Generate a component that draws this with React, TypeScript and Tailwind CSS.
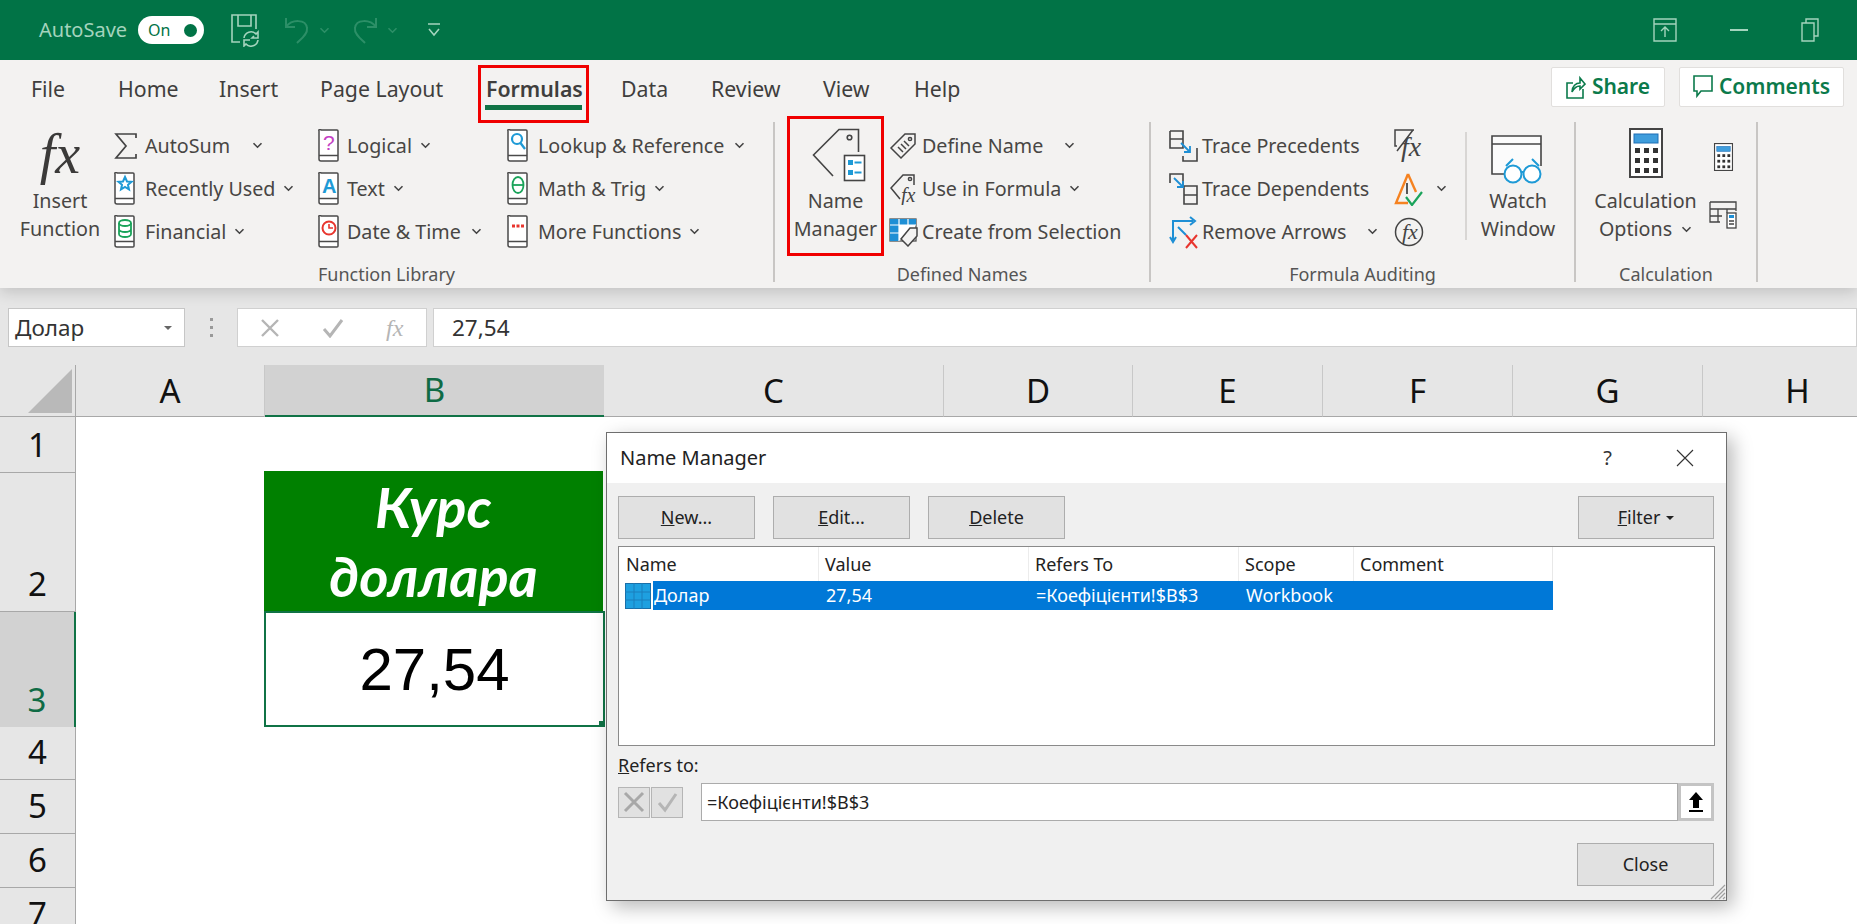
import type { ReactNode } from "react";

const Chev = ({ className = "", color = "#444" }: { className?: string; color?: string }) => (
  <svg width="11" height="7" viewBox="0 0 11 7" className={className}>
    <path d="M1.5 1.2 5.5 5.2 9.5 1.2" fill="none" stroke={color} strokeWidth="1.6" />
  </svg>
);

const Book = ({ children }: { children?: ReactNode }) => (
  <svg width="22" height="33" viewBox="0 0 22 33">
    <path d="M3 1h16a1 1 0 0 1 1 1v29a1 1 0 0 1-1 1H3a2 2 0 0 1-2-2V2a1 1 0 0 1 2-1z" fill="#fff" stroke="#4a4a4a" strokeWidth="1.5" />
    <path d="M1 26.5h19" stroke="#4a4a4a" strokeWidth="1.5" />
    {children}
  </svg>
);

const SmallFx = ({ x, y, size = 20 }: { x: number; y: number; size?: number }) => (
  <text x={x} y={y} fontFamily="Liberation Serif" fontStyle="italic" fontSize={size} fill="#444" stroke="none">fx</text>
);

const Item = ({ icon, iconBox, text, chev }: { icon: ReactNode; iconBox: string; text?: string; chev?: string }) => (
  <div className="flex h-[43px] items-center">
    <div className={iconBox + " flex items-center"}>{icon}</div>
    {text && <span className="whitespace-nowrap">{text}</span>}
    {chev && <Chev className={chev} />}
  </div>
);

const GroupLabel = ({ text }: { text: string }) => (
  <div className="flex h-[24px] items-center justify-center text-[18px] text-[#555]">{text}</div>
);

const Sep = () => <div className="my-[6px] w-[2px] bg-[#c8c6c4]" />;

const sigma = (
  <svg width="24" height="28" viewBox="0 0 24 28">
    <path d="M22 6V2H2l10 12L2 26h20v-4" fill="none" stroke="#444" strokeWidth="1.7" />
  </svg>
);

const TagIcon = () => (
  <svg width="54" height="54" viewBox="0 0 54 54">
    <path d="M46.5 24V1.5H27L1.5 27 21 48" fill="none" stroke="#444" strokeWidth="1.6" />
    <circle cx="37.5" cy="9.5" r="2.3" fill="none" stroke="#444" strokeWidth="1.6" />
    <rect x="32.5" y="27.5" width="20" height="25" fill="#fff" stroke="#444" strokeWidth="1.6" />
    <rect x="36" y="32" width="5" height="5" fill="#1e9ad6" />
    <rect x="36" y="42" width="5" height="5" fill="#1e9ad6" />
    <path d="M42.5 34.5h7M42.5 44.5h7" stroke="#1e9ad6" strokeWidth="1.8" />
  </svg>
);

const traceBlue = "#1e8fd5";

const Calculator = ({ w, h }: { w: number; h: number }) => (
  <svg width={w} height={h} viewBox="0 0 34 50">
    <rect x="1" y="1" width="32" height="48" fill="#fff" stroke="#444" strokeWidth="2" />
    <rect x="5" y="6" width="24" height="9" fill="#3f9ddc" stroke="#1f6fb5" />
    {[20, 30, 40].flatMap((y) =>
      [6, 15, 24].map((x) => <rect key={x + "-" + y} x={x} y={y} width="5" height="5" fill="#333" />),
    )}
  </svg>
);

const rowHeads = [
  { n: "1", h: "h-[56px]" },
  { n: "2", h: "h-[139px]" },
  { n: "3", h: "h-[115px]", active: true },
  { n: "4", h: "h-[53px]" },
  { n: "5", h: "h-[54px]" },
  { n: "6", h: "h-[54px]" },
  { n: "7", h: "h-[54px]" },
];

const cols = [
  { n: "A", w: "w-[189px]" },
  { n: "B", w: "w-[339px]", active: true },
  { n: "C", w: "w-[340px]" },
  { n: "D", w: "w-[189px]" },
  { n: "E", w: "w-[190px]" },
  { n: "F", w: "w-[190px]" },
  { n: "G", w: "w-[190px]" },
  { n: "H", w: "w-[190px]" },
];

const tabs = [
  { t: "File", w: "w-[87px]" },
  { t: "Home", w: "w-[101px]" },
  { t: "Insert", w: "w-[101px]" },
  { t: "Page Layout", w: "w-[166px]" },
  { t: "Formulas", w: "w-[135px]", active: true },
  { t: "Data", w: "w-[90px]" },
  { t: "Review", w: "w-[112px]" },
  { t: "View", w: "w-[91px]" },
  { t: "Help", w: "w-[60px]" },
];

const DlgButton = ({ children, className }: { children: ReactNode; className: string }) => (
  <div className={className + " flex h-[43px] items-center justify-center border border-[#adadad] bg-[#e1e1e1] text-[18px] text-[#222]"}>{children}</div>
);

export default function App() {
  return (
    <div className="relative flex h-[924px] w-[1857px] flex-col overflow-hidden bg-white font-['Noto_Sans',sans-serif] text-[#484644]">
      {/* title bar */}
      <div className="flex h-[60px] shrink-0 items-center bg-[#017346] pl-[39px] pr-[38px] text-[#a4d4bd]">
        <span className="w-[88px] whitespace-nowrap text-[20px]">AutoSave</span>
        <div className="ml-[11px] flex h-[28px] w-[66px] items-center justify-between rounded-full bg-white pl-[10px] pr-[7px] text-[16px] text-[#017346]">
          <span>On</span>
          <span className="h-[13px] w-[13px] rounded-full bg-[#017346]" />
        </div>
        <svg width="30" height="34" viewBox="0 0 30 34" className="ml-[26px]" fill="none" stroke="#a4d4bd" strokeWidth="1.6">
          <path d="M10 29H2V2h24v14M8 2v11h13V2" />
          <path d="M14 25a7 7 0 0 1 12-4l2-2v6h-6l2-2M28 27a7 7 0 0 1-12 4l-2 2v-6h6" />
        </svg>
        <svg width="26" height="30" viewBox="0 0 26 30" className="ml-[24px]" fill="none" stroke="#2c8f67" strokeWidth="2">
          <path d="M2 3v9h9M2 12C8 4 22 4 23 13c1 6-6 11-10 15" />
        </svg>
        <Chev className="ml-[9px]" color="#2c8f67" />
        <svg width="26" height="30" viewBox="0 0 26 30" className="ml-[22px]" fill="none" stroke="#2c8f67" strokeWidth="2">
          <path d="M24 3v9h-9M24 12C18 4 4 4 3 13c-1 6 6 11 10 15" />
        </svg>
        <Chev className="ml-[9px]" color="#2c8f67" />
        <svg width="14" height="16" viewBox="0 0 14 16" className="ml-[29px]" fill="none" stroke="#a4d4bd" strokeWidth="1.6">
          <path d="M1 2h12M2 7l5 6 5-6" />
        </svg>
        <div className="ml-auto flex items-center gap-[53px]">
          <svg width="24" height="24" viewBox="0 0 24 24" fill="none" stroke="#a4d4bd" strokeWidth="1.4">
            <path d="M1 1h22v22H1zM1 6h22M12 19v-9M8 13l4-4 4 4" />
          </svg>
          <div className="h-[2px] w-[18px] bg-[#a4d4bd]" />
          <svg width="18" height="24" viewBox="0 0 18 24" fill="none" stroke="#a4d4bd" strokeWidth="1.4">
            <path d="M5 5V1h12v17h-4M1 5h12v18H1z" />
          </svg>
        </div>
      </div>

      {/* tabs */}
      <div className="relative z-20 flex h-[56px] shrink-0 items-start bg-[#f3f2f1] pl-[31px] text-[21.3px] text-[#3f3e3d]">
        {tabs.map((t) => (
          <div key={t.t} className={t.w + " relative pt-[13px] leading-[32px] whitespace-nowrap"}>
            <span className={t.active ? "font-semibold" : ""}>{t.t}</span>
            {t.active && <div className="absolute left-[-1px] top-[45px] h-[5px] w-[97px] bg-[#107346]" />}
          </div>
        ))}
        <div className="absolute left-[478px] top-[5px] h-[58px] w-[111px] border-[3px] border-[#f00000]" />
        <div className="ml-auto mt-[7px] flex gap-[14px] pr-[13px]">
          <div className="flex h-[40px] w-[114px] items-center justify-center gap-[6px] rounded-[2px] border border-[#e1dfdd] bg-white text-[21px] font-semibold text-[#0b7a4b]">
            <svg width="20" height="26" viewBox="0 0 20 26" fill="none" stroke="#0b7a4b" strokeWidth="1.6">
              <path d="M7 9H1v15h16v-9M6 18c0-6 4-9 8-9V4l5 6-5 5v-3c-4 0-6 2-8 6z" />
            </svg>
            Share
          </div>
          <div className="flex h-[40px] w-[165px] items-center justify-center gap-[6px] rounded-[2px] border border-[#e1dfdd] bg-white text-[21px] font-semibold text-[#0b7a4b]">
            <svg width="20" height="26" viewBox="0 0 20 26" fill="none" stroke="#0b7a4b" strokeWidth="1.6">
              <path d="M1 2h18v15H8l-4 5v-5H1z" />
            </svg>
            Comments
          </div>
        </div>
      </div>

      {/* ribbon */}
      <div className="relative z-10 flex h-[172px] shrink-0 bg-[#f3f2f1] text-[19.7px] shadow-[0_4px_14px_rgba(0,0,0,0.16)]">
        <div className="flex w-[773px] flex-col">
          <div className="flex h-[146px] pt-[8px]">
            <div className="ml-[16px] flex w-[88px] flex-col items-center">
              <span className="h-[61px] font-['Liberation_Serif',serif] text-[56px] italic leading-[60px] text-[#3b3a39]">fx</span>
              <span className="mt-[2px] leading-[28px]">Insert</span>
              <span className="leading-[28px]">Function</span>
            </div>
            <div className="ml-[10px] w-[204px]">
              <Item iconBox="w-[31px]" icon={sigma} text="AutoSum" chev="ml-[22px]" />
              <Item iconBox="w-[31px]" icon={<Book><path d="M11 5l2 4.5 4.5.3-3.5 3 1 4.7-4-2.5-4 2.5 1-4.7-3.5-3 4.5-.3z" fill="none" stroke="#1e9ad6" strokeWidth="2" /></Book>} text="Recently Used" chev="ml-[8px]" />
              <Item iconBox="w-[31px]" icon={<Book><ellipse cx="11" cy="8" rx="6" ry="3" fill="none" stroke="#1aa35a" strokeWidth="1.8" /><path d="M5 8v11a6 3 0 0 0 12 0V8M5 14a6 3 0 0 0 12 0" fill="none" stroke="#1aa35a" strokeWidth="1.8" /></Book>} text="Financial" chev="ml-[8px]" />
            </div>
            <div className="w-[189px]">
              <Item iconBox="w-[29px]" icon={<Book><text x="5" y="21" fontSize="21" fill="#c43fc4" fontFamily="Liberation Sans">?</text></Book>} text="Logical" chev="ml-[8px]" />
              <Item iconBox="w-[29px]" icon={<Book><text x="4" y="21" fontSize="20" fontWeight="bold" fill="#1e9ad6" fontFamily="Liberation Sans">A</text></Book>} text="Text" chev="ml-[8px]" />
              <Item iconBox="w-[29px]" icon={<Book><circle cx="11" cy="13" r="6.5" fill="none" stroke="#e8352e" strokeWidth="2" /><path d="M11 9v4h4" fill="none" stroke="#e8352e" strokeWidth="1.6" /></Book>} text="Date & Time" chev="ml-[10px]" />
            </div>
            <div>
              <Item iconBox="w-[31px]" icon={<Book><circle cx="10" cy="10" r="5" fill="none" stroke="#1e9ad6" strokeWidth="2.2" /><path d="M13.5 14l4.5 6" stroke="#1e9ad6" strokeWidth="2.4" /></Book>} text="Lookup & Reference" chev="ml-[10px]" />
              <Item iconBox="w-[31px]" icon={<Book><ellipse cx="11" cy="13" rx="5.5" ry="8" fill="none" stroke="#1aa35a" strokeWidth="1.8" /><path d="M5.5 13h11" stroke="#1aa35a" strokeWidth="1.8" /></Book>} text="Math & Trig" chev="ml-[8px]" />
              <Item iconBox="w-[31px]" icon={<Book><path d="M5 11h3M9.5 11h3M14 11h3" stroke="#e8352e" strokeWidth="3" /></Book>} text="More Functions" chev="ml-[8px]" />
            </div>
          </div>
          <GroupLabel text="Function Library" />
        </div>
        <Sep />
        <div className="flex w-[374px] flex-col">
          <div className="flex h-[146px] pt-[8px]">
            <div className="ml-[12px] flex w-[97px] flex-col items-center">
              <div className="ml-[7px] flex h-[61px] items-start pt-[4px]"><TagIcon /></div>
              <span className="mt-[2px] leading-[28px]">Name</span>
              <span className="leading-[28px]">Manager</span>
            </div>
            <div className="ml-[5px]">
              <Item
                iconBox="w-[33px]"
                icon={
                  <svg width="28" height="28" viewBox="0 0 28 28" fill="none" stroke="#444" strokeWidth="1.5">
                    <path d="M16 2h10v10L12 26 2 16z" />
                    <circle cx="21" cy="7" r="1.6" />
                    <path d="M9 15l5 5M12 12l5 5M15 9l5 5" />
                  </svg>
                }
                text="Define Name"
                chev="ml-[21px]"
              />
              <Item
                iconBox="w-[33px]"
                icon={
                  <svg width="30" height="32" viewBox="0 0 30 32" fill="none" stroke="#444" strokeWidth="1.5">
                    <path d="M25 12V2H14L2 15l9 11" />
                    <circle cx="21" cy="6" r="1.6" />
                    <SmallFx x={12} y={29} size={20} />
                  </svg>
                }
                text="Use in Formula"
                chev="ml-[8px]"
              />
              <Item
                iconBox="w-[33px]"
                icon={
                  <svg width="30" height="30" viewBox="0 0 30 30">
                    <rect x="1" y="2" width="26" height="22" fill="#fff" stroke="#555" strokeWidth="1.3" />
                    <rect x="1" y="2" width="9" height="22" fill="#1e8fd5" />
                    <rect x="1" y="2" width="26" height="6" fill="#1e8fd5" />
                    <path d="M10 2v22M19 2v10M1 8h26M1 16h14" stroke="#fff" strokeWidth="1.2" />
                    <path d="M21 11h7v8l-9 10-7-7z" fill="#f3f2f1" stroke="#444" strokeWidth="1.5" />
                  </svg>
                }
                text="Create from Selection"
              />
            </div>
          </div>
          <GroupLabel text="Defined Names" />
        </div>
        <Sep />
        <div className="flex w-[423px] flex-col">
          <div className="flex h-[146px] pt-[8px]">
            <div className="ml-[18px] w-[225px]">
              <Item
                iconBox="w-[33px]"
                icon={
                  <svg width="29" height="32" viewBox="0 0 29 32" fill="none" strokeWidth="1.6">
                    <path d="M1 1h13v17H1V1M1 9h13" stroke="#444" />
                    <path d="M28 18v13H14v-5" stroke="#444" />
                    <path d="M12 13l9 9M21 16v6h-6" stroke={traceBlue} strokeWidth="1.8" />
                  </svg>
                }
                text="Trace Precedents"
              />
              <Item
                iconBox="w-[33px]"
                icon={
                  <svg width="29" height="32" viewBox="0 0 29 32" fill="none" strokeWidth="1.6">
                    <path d="M14 14V1H1v9" stroke="#444" />
                    <path d="M15 13h13v18H15zM15 22h13" stroke="#444" />
                    <path d="M5 5l9 9M14 8v6H8" stroke={traceBlue} strokeWidth="1.8" />
                  </svg>
                }
                text="Trace Dependents"
              />
              <Item
                iconBox="w-[33px]"
                icon={
                  <svg width="30" height="34" viewBox="0 0 30 34" fill="none" strokeWidth="2">
                    <path d="M4 26V6h20M1 22l3 5 3-5M21 2l5 4-5 4M9 12l8 8" stroke={traceBlue} />
                    <path d="M17 20l11 13M28 20L17 33" stroke="#e8352e" />
                  </svg>
                }
                text="Remove Arrows"
                chev="ml-[21px]"
              />
            </div>
            <div className="w-[71px]">
              <Item
                iconBox="w-[30px]"
                icon={
                  <svg width="30" height="34" viewBox="0 0 30 34" fill="none" stroke="#444" strokeWidth="1.5">
                    <path d="M20 1H1v16h2M19 1L3 22" />
                    <SmallFx x={7} y={27} size={28} />
                  </svg>
                }
              />
              <Item
                iconBox="w-[41px]"
                icon={
                  <svg width="30" height="34" viewBox="0 0 30 34" fill="none">
                    <path d="M14 2L2 31h12" stroke="#f58220" strokeWidth="2.4" />
                    <path d="M14 2l8 18" stroke="#f58220" strokeWidth="2.4" />
                    <path d="M13 11v11" stroke="#444" strokeWidth="1.8" />
                    <path d="M12 25l6 8 10-13" stroke="#1aa35a" strokeWidth="2.2" />
                  </svg>
                }
                chev="ml-[1px]"
              />
              <Item
                iconBox="w-[30px]"
                icon={
                  <svg width="30" height="34" viewBox="0 0 30 34" fill="none" stroke="#444" strokeWidth="1.5">
                    <circle cx="15" cy="17" r="13.5" />
                    <SmallFx x={8} y={24} size={22} />
                  </svg>
                }
              />
            </div>
            <div className="mt-[8px] h-[108px] w-[2px] bg-[#d8d6d4]" />
            <div className="ml-[8px] flex w-[86px] flex-col items-center">
              <div className="flex h-[61px] items-start pt-[10px]">
                <svg width="56" height="50" viewBox="0 0 56 50" fill="none">
                  <path d="M23 40H2V2h49v30" stroke="#444" strokeWidth="1.6" fill="#fbfbfb" />
                  <path d="M2 10h49" stroke="#444" strokeWidth="1.6" />
                  <circle cx="23" cy="40" r="8.5" stroke="#1e9ad6" strokeWidth="2" fill="#fff" />
                  <circle cx="42" cy="40" r="8.5" stroke="#1e9ad6" strokeWidth="2" fill="#fff" />
                  <path d="M31 38h3M16 32l7-7M49 32l-7-7" stroke="#1e9ad6" strokeWidth="2" />
                </svg>
              </div>
              <span className="mt-[2px] leading-[28px]">Watch</span>
              <span className="leading-[28px]">Window</span>
            </div>
          </div>
          <GroupLabel text="Formula Auditing" />
        </div>
        <Sep />
        <div className="flex w-[180px] flex-col">
          <div className="flex h-[146px] pt-[8px]">
            <div className="ml-[7px] flex w-[125px] flex-col items-center">
              <div className="flex h-[61px] items-start pt-[4px]"><Calculator w={34} h={50} /></div>
              <span className="mt-[2px] whitespace-nowrap leading-[28px]">Calculation</span>
              <span className="flex items-center gap-[9px] leading-[28px]">Options <Chev /></span>
            </div>
            <div className="ml-[1px] flex flex-col items-center">
              <div className="mt-[19px]"><Calculator w={21} h={28} /></div>
              <svg width="28" height="28" viewBox="0 0 28 28" className="mt-[30px]" fill="none" stroke="#444" strokeWidth="1.3">
                <path d="M1 1h26v9M1 1v20h10M1 8h26M1 15h12M9 8v13M18 8v4" />
                <rect x="18" y="12" width="9" height="15" fill="#fff" />
                <rect x="20" y="14" width="5" height="3" fill="#1e8fd5" stroke="none" />
                <path d="M20 20h5M20 23h5" />
              </svg>
            </div>
          </div>
          <GroupLabel text="Calculation" />
        </div>
        <Sep />
        {/* red mark around Name Manager */}
        <div className="absolute left-[787px] top-0 h-[140px] w-[97px] border-[3px] border-[#f00000]" />
      </div>

      {/* formula bar */}
      <div className="flex h-[77px] shrink-0 items-start bg-[#e6e6e6] pl-[8px] pt-[20px] text-[#333]">
        <div className="flex h-[39px] w-[177px] items-center justify-between border border-[#c6c6c6] bg-white pl-[6px] pr-[12px] text-[22.5px]">
          Долар
          <span className="h-0 w-0 border-x-[4px] border-t-[4px] border-x-transparent border-t-[#666]" />
        </div>
        <div className="flex h-[39px] w-[52px] flex-col items-center justify-center gap-[5px]">
          <span className="h-[3px] w-[3px] bg-[#999]" />
          <span className="h-[3px] w-[3px] bg-[#999]" />
          <span className="h-[3px] w-[3px] bg-[#999]" />
        </div>
        <div className="flex h-[39px] w-[190px] items-center border border-[#d0d0d0] bg-white pl-[22px]">
          <svg width="20" height="20" viewBox="0 0 20 20" stroke="#b5b5b5" strokeWidth="2.4"><path d="M2 2l16 16M18 2L2 18" /></svg>
          <svg width="22" height="20" viewBox="0 0 22 20" className="ml-[42px]" fill="none" stroke="#b5b5b5" strokeWidth="3"><path d="M2 11l6 7L20 2" /></svg>
          <span className="ml-[42px] font-['Liberation_Serif',serif] text-[24px] italic text-[#b5b5b5]">fx</span>
        </div>
        <div className="ml-[6px] flex h-[39px] flex-1 items-center border border-[#d0d0d0] bg-white pl-[18px] text-[22.5px]">27,54</div>
      </div>

      {/* sheet */}
      <div className="flex h-[52px] shrink-0 bg-[#e6e6e6] text-[33px] text-[#111]">
        <div className="flex w-[76px] shrink-0 items-end justify-end border-b border-r border-[#a8a8a8] pb-[3px] pr-[3px]">
          <div className="h-0 w-0 border-b-[44px] border-l-[44px] border-b-[#b9b9b9] border-l-transparent" />
        </div>
        {cols.map((c) => (
          <div
            key={c.n}
            className={
              c.w +
              " flex shrink-0 items-center justify-center leading-[50px] " +
              (c.active ? "border-b-[2px] border-[#107346] bg-[#d2d2d2] text-[#0f6b45]" : "border-b border-r border-b-[#a8a8a8] border-r-[#c8c8c8]")
            }
          >
            {c.n}
          </div>
        ))}
      </div>
      <div className="flex flex-1">
        <div className="w-[76px] shrink-0 overflow-hidden text-[33px] text-[#111]">
          {rowHeads.map((r) => (
            <div
              key={r.n}
              className={
                r.h +
                " flex items-end justify-center pb-[2px] leading-[50px] " +
                (r.active ? "border-r-[2px] border-[#107346] bg-[#d2d2d2] text-[#0f6b45]" : "border-b border-r border-b-[#a8a8a8] border-r-[#a8a8a8] bg-[#e6e6e6]")
              }
            >
              {r.n}
            </div>
          ))}
        </div>
        <div className="flex-1 pl-[188px] pt-[54px]">
          <div className="flex h-[140px] w-[339px] flex-col items-center justify-center bg-[#008000] font-['Lato','Noto_Sans',sans-serif] text-[56px] font-bold italic leading-[69px] text-white">
            <span>Курс</span>
            <span>доллара</span>
          </div>
          <div className="relative flex h-[116px] w-[341px] items-center justify-center border-[2px] border-[#107346] pt-[2px] font-['Liberation_Sans',sans-serif] text-[60px] text-black">
            27,54
            <div className="absolute bottom-[-2px] right-[-2px] h-[6px] w-[6px] bg-[#107346]" />
          </div>
        </div>
      </div>

      {/* name manager dialog */}
      <div className="absolute left-[606px] top-[432px] flex h-[469px] w-[1121px] flex-col border border-[#6e6e6e] bg-[#f0f0f0] text-[#222] shadow-[6px_6px_18px_rgba(0,0,0,0.28)]">
        <div className="flex h-[50px] shrink-0 items-center bg-white pl-[13px] pr-[32px] text-[20px]">
          <span>Name Manager</span>
          <span className="ml-auto text-[20px] text-[#333]">?</span>
          <svg width="18" height="18" viewBox="0 0 18 18" className="ml-[64px]" stroke="#333" strokeWidth="1.1"><path d="M1 1l16 16M17 1L1 17" /></svg>
        </div>
        <div className="flex flex-1 flex-col px-[11px] pt-[13px]">
          <div className="flex">
            <DlgButton className="w-[137px]"><span><span className="underline">N</span>ew...</span></DlgButton>
            <DlgButton className="ml-[18px] w-[137px]"><span><span className="underline">E</span>dit...</span></DlgButton>
            <DlgButton className="ml-[18px] w-[137px]"><span><span className="underline">D</span>elete</span></DlgButton>
            <DlgButton className="ml-auto mr-[1px] w-[136px] gap-[6px]">
              <span><span className="underline">F</span>ilter</span>
              <span className="h-0 w-0 border-x-[4px] border-t-[4px] border-x-transparent border-t-[#222]" />
            </DlgButton>
          </div>
          <div className="mt-[7px] h-[200px] border border-[#8a8a8a] bg-white text-[18px]">
            <div className="flex h-[34px] w-[934px] items-center border-r border-[#e8e8e8]">
              <span className="h-full w-[200px] border-r border-[#ececec] pl-[7px] leading-[35px]">Name</span>
              <span className="h-full w-[210px] border-r border-[#ececec] pl-[6px] leading-[35px]">Value</span>
              <span className="h-full w-[210px] border-r border-[#ececec] pl-[6px] leading-[35px]">Refers To</span>
              <span className="h-full w-[115px] border-r border-[#ececec] pl-[6px] leading-[35px]">Scope</span>
              <span className="pl-[6px] leading-[35px]">Comment</span>
            </div>
            <div className="flex h-[29px] w-[934px] items-center">
              <div className="flex w-[34px] justify-center pl-[4px]">
                <svg width="26" height="26" viewBox="0 0 26 26">
                  <rect x="0.5" y="0.5" width="25" height="25" fill="#1ea0e0" stroke="#1a6fa8" />
                  <path d="M0 9h26M0 17h26M9 0v26M17 0v26" stroke="#1a7fbc" strokeWidth="1" />
                </svg>
              </div>
              <div className="flex h-full flex-1 items-center bg-[#0078d7] text-white">
                <span className="w-[173px] pl-[1px]">Долар</span>
                <span className="w-[210px]">27,54</span>
                <span className="w-[210px]">=Коефіцієнти!$B$3</span>
                <span>Workbook</span>
              </div>
            </div>
          </div>
          <div className="mt-[8px] h-[22px] text-[18px] leading-[22px]"><span className="underline">R</span>efers to:</div>
          <div className="mt-[7px] flex h-[38px] items-center">
            <div className="flex h-[31px] w-[32px] items-center justify-center border border-[#b5b5b5] bg-[#e1e1e1]">
              <svg width="22" height="22" viewBox="0 0 22 22" stroke="#a8a8a8" strokeWidth="3"><path d="M2 2l18 18M20 2L2 20" /></svg>
            </div>
            <div className="ml-[1px] flex h-[31px] w-[32px] items-center justify-center border border-[#b5b5b5] bg-[#e1e1e1]">
              <svg width="22" height="22" viewBox="0 0 22 22" fill="none" stroke="#b5b5b5" strokeWidth="3"><path d="M3 12l6 7L20 3" /></svg>
            </div>
            <div className="ml-[18px] flex h-[38px] flex-1 items-center border border-[#ababab] bg-white pl-[5px] text-[18px]">=Коефіцієнти!$B$3</div>
            <div className="mr-[1px] flex h-[38px] w-[36px] items-center justify-center border-[3px] border-[#c4c4c4] bg-white">
              <svg width="16" height="22" viewBox="0 0 16 22" fill="#000">
                <path d="M8 1l7 8h-4v8H5V9H1z" />
                <rect x="1" y="19" width="14" height="2" />
              </svg>
            </div>
          </div>
          <div className="mt-[22px] flex justify-end pr-[1px]">
            <DlgButton className="w-[137px]">Close</DlgButton>
          </div>
        </div>
        <svg width="16" height="16" viewBox="0 0 16 16" className="absolute bottom-0 right-0" stroke="#a0a0a0" strokeWidth="1.2">
          <path d="M15 1L1 15M15 5L5 15M15 9L9 15M15 13L13 15" />
        </svg>
      </div>
    </div>
  );
}
